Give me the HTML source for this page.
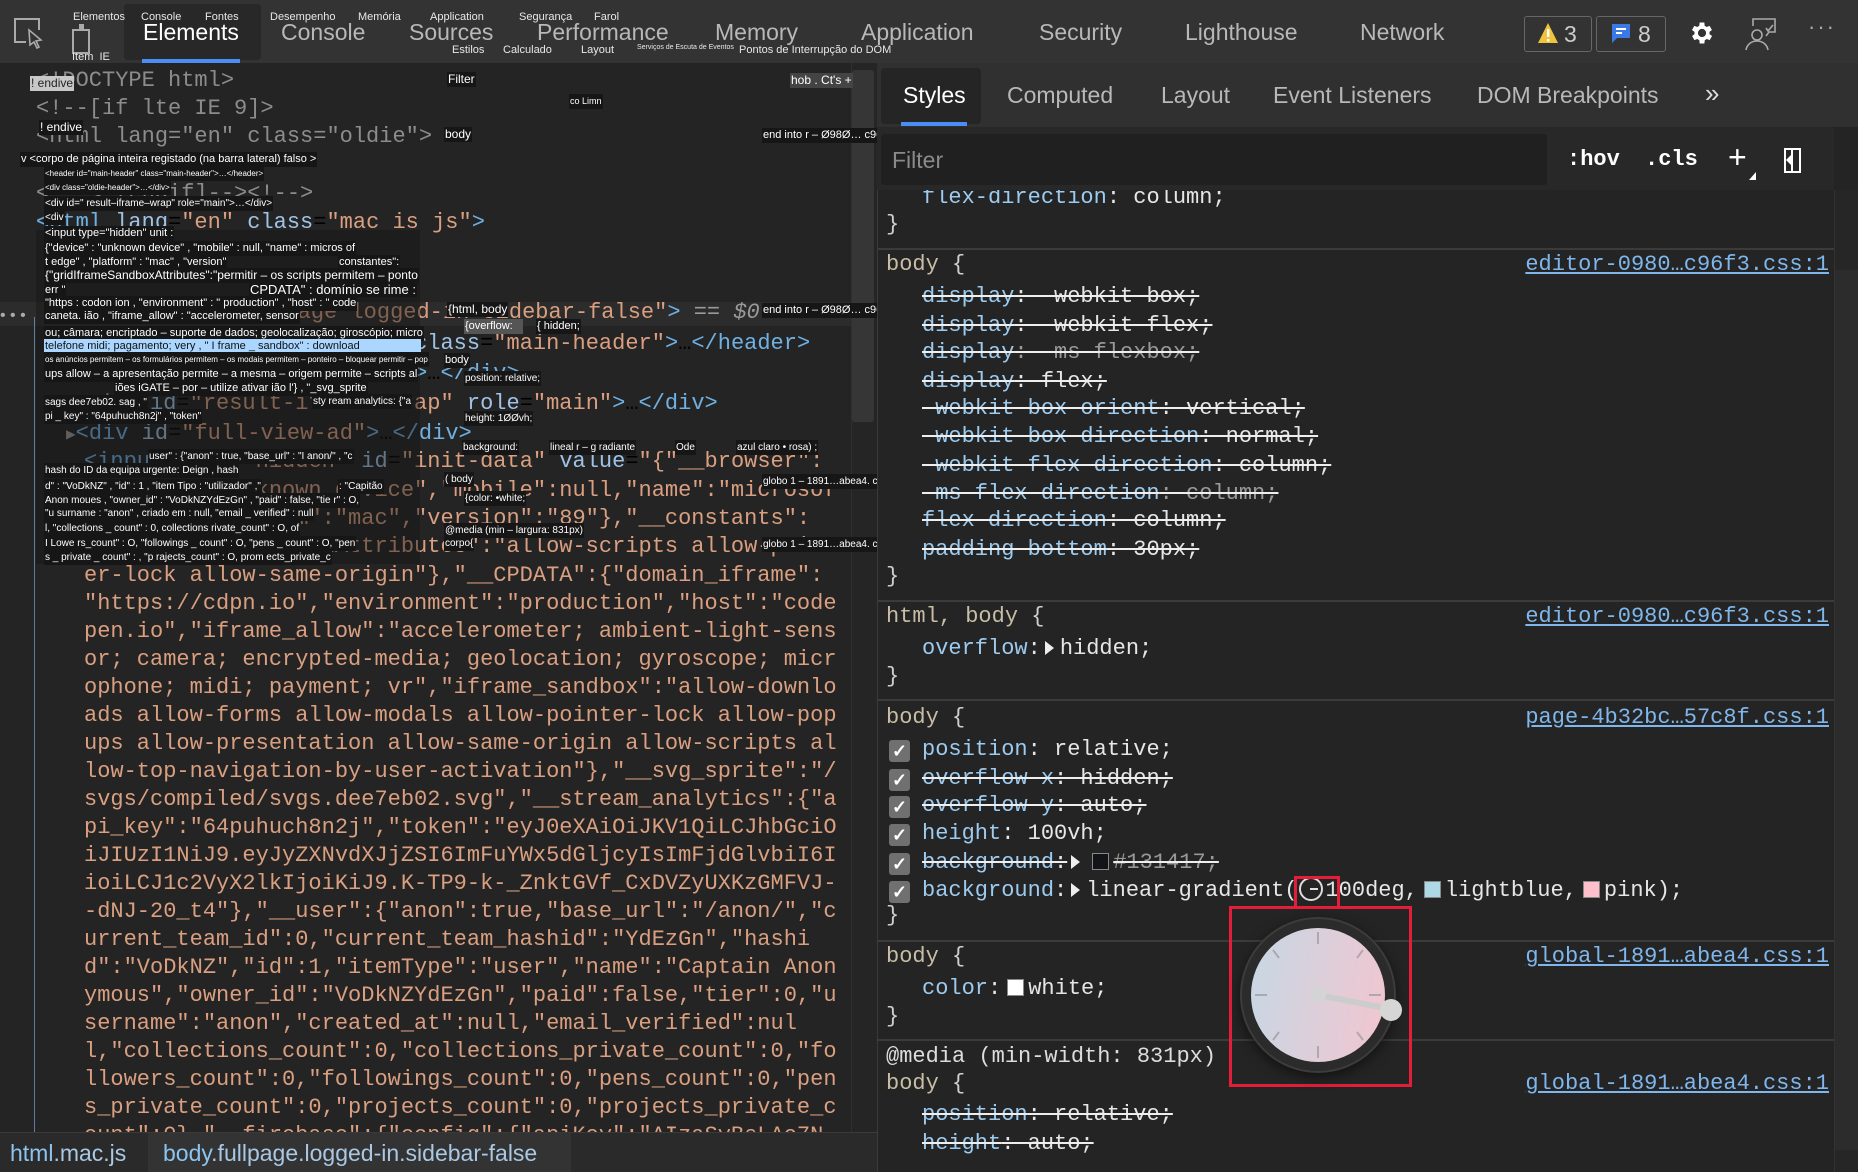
<!DOCTYPE html>
<html><head><meta charset="utf-8">
<style>
*{margin:0;padding:0;box-sizing:border-box}
html,body{width:1858px;height:1172px;overflow:hidden;background:#242424;font-family:"Liberation Sans",sans-serif;position:relative}
.a{position:absolute;white-space:pre}
.m{font-family:"Liberation Mono",monospace;font-size:22px;line-height:28px;height:28px}
.tab{position:absolute;top:17px;font-size:23px;color:#b8b8b8;line-height:30px}
.sm{position:absolute;font-size:11px;color:#e8e8e8;line-height:13px;white-space:nowrap;font-family:"Liberation Sans Narrow","Liberation Sans",sans-serif}
.t{font-size:12px;color:#fff;background:#161616;line-height:15px;font-family:"Liberation Sans Narrow","Liberation Sans",sans-serif;position:absolute;white-space:nowrap;padding:0 1px}
.tg{color:#6fb1e3}.at{color:#9fc3e6}.av{color:#d99f80}.cm{color:#8c8c8c}.ct{color:#d99f80}
.pn{color:#9ccbef}.pv{color:#e6e6e6}.sel{color:#c8bda5}.br{color:#cfcfcf}
.st{text-decoration:line-through;text-decoration-color:#eee}
.lk{color:#7fb6ec;text-decoration:underline;position:absolute;right:29px;font-family:"Liberation Mono",monospace;font-size:22px;line-height:28px}
.sep{position:absolute;left:877px;width:957px;height:2px;background:#3b3b3b}
.cb{position:absolute;left:889px;width:21px;height:22px;background:#707070;border-radius:3px;color:#fff;font-size:18px;line-height:22px;text-align:center;font-weight:bold}
.tri{display:inline-block;width:0;height:0;border-left:9px solid #eee;border-top:7px solid transparent;border-bottom:7px solid transparent;margin:0 6px 0 4px;vertical-align:-1px}
.sw{display:inline-block;width:17px;height:17px;border:1px solid #888;vertical-align:-2px;margin:0 4px 0 6px}
</style></head><body>

<!-- top bar -->
<div class="a" style="left:0;top:0;width:1858px;height:63px;background:#333"></div>
<div class="a" style="left:124px;top:4px;width:137px;height:56px;background:#282828;border-radius:4px"></div>
<div class="a" style="left:142px;top:59px;width:98px;height:4px;background:#4a8ef5"></div>
<svg class="a" style="left:12px;top:16px" width="34" height="34" viewBox="0 0 34 34"><path d="M14 26H3V3h24v11" fill="none" stroke="#aaa" stroke-width="2"/><path d="M17 14l12 10-5 1 3 6-2 1-3-6-4 3z" fill="none" stroke="#aaa" stroke-width="1.6"/></svg>
<svg class="a" style="left:70px;top:24px" width="24" height="30" viewBox="0 0 24 30"><rect x="3" y="6" width="16" height="23" fill="none" stroke="#aaa" stroke-width="2"/><rect x="9" y="0" width="5" height="6" fill="#aaa"/></svg>
<div class="sm" style="left:73px;top:11px">Elementos</div>
<div class="sm" style="left:141px;top:11px">Console</div>
<div class="sm" style="left:205px;top:11px">Fontes</div>
<div class="sm" style="left:270px;top:11px">Desempenho</div>
<div class="sm" style="left:358px;top:11px">Memória</div>
<div class="sm" style="left:430px;top:11px">Application</div>
<div class="sm" style="left:519px;top:11px">Segurança</div>
<div class="sm" style="left:594px;top:11px">Farol</div>
<div class="sm" style="left:72px;top:51px">Item&nbsp; IE</div>
<div class="sm" style="left:452px;top:44px">Estilos</div>
<div class="sm" style="left:503px;top:44px">Calculado</div>
<div class="sm" style="left:581px;top:44px">Layout</div>
<div class="sm" style="left:637px;top:41px;font-size:7px">Serviços de Escuta de Eventos</div>
<div class="sm" style="left:739px;top:44px">Pontos de Interrupção do DOM</div>
<div class="tab" style="left:143px;color:#fff">Elements</div>
<div class="tab" style="left:281px">Console</div>
<div class="tab" style="left:409px">Sources</div>
<div class="tab" style="left:537px">Performance</div>
<div class="tab" style="left:715px">Memory</div>
<div class="tab" style="left:861px">Application</div>
<div class="tab" style="left:1039px">Security</div>
<div class="tab" style="left:1185px">Lighthouse</div>
<div class="tab" style="left:1360px">Network</div>
<div class="a" style="left:1524px;top:16px;width:68px;height:36px;border:1.5px solid #666;border-radius:3px"></div>
<svg class="a" style="left:1537px;top:22px" width="22" height="22" viewBox="0 0 22 22"><path d="M11 1L21 21H1z" fill="#f0c33c"/><rect x="10" y="7" width="2.4" height="8" fill="#fff"/><rect x="10" y="17" width="2.4" height="2.4" fill="#fff"/></svg>
<div class="a" style="left:1564px;top:18px;font-size:23px;color:#ccc;line-height:32px">3</div>
<div class="a" style="left:1596px;top:16px;width:70px;height:36px;border:1.5px solid #666;border-radius:3px"></div>
<svg class="a" style="left:1611px;top:23px" width="20" height="22" viewBox="0 0 20 22"><path d="M1 1h18v14H6l-5 5z" fill="#3b7ae6"/><rect x="5" y="5" width="10" height="2" fill="#fff"/><rect x="5" y="9" width="6" height="2" fill="#fff"/></svg>
<div class="a" style="left:1638px;top:18px;font-size:23px;color:#ccc;line-height:32px">8</div>
<svg class="a" style="left:1688px;top:19px" width="28" height="28" viewBox="0 0 24 24"><path fill="#fff" d="M19.4 13a7.5 7.5 0 000-2l2.1-1.6-2-3.5-2.5 1a7 7 0 00-1.7-1L15 3h-4l-.4 2.9a7 7 0 00-1.7 1l-2.5-1-2 3.5L6.6 11a7.5 7.5 0 000 2l-2.1 1.6 2 3.5 2.5-1a7 7 0 001.7 1L11 21h4l.4-2.9a7 7 0 001.7-1l2.5 1 2-3.5zM13 15.5a3.5 3.5 0 110-7 3.5 3.5 0 010 7z" transform="translate(-1 0)"/></svg>
<svg class="a" style="left:1744px;top:16px" width="36" height="36" viewBox="0 0 36 36"><path d="M9 10V3h22v13h-6l-3 4" fill="none" stroke="#aaa" stroke-width="1.6"/><path d="M22 12l2 3 5-6" fill="none" stroke="#aaa" stroke-width="1.6"/><circle cx="13" cy="19" r="5" fill="none" stroke="#aaa" stroke-width="1.6"/><path d="M2 34c1-6 6-9 11-9s10 3 11 9" fill="none" stroke="#aaa" stroke-width="1.6"/></svg>
<div class="a" style="left:1808px;top:14px;font-size:22px;color:#aaa;letter-spacing:2px">···</div>

<!-- left panel -->
<div class="a" style="left:0;top:302px;width:851px;height:24px;background:#2c2c2c"></div>
<div class="a" style="left:0;top:307px;color:#aaa;font-size:16px">• • •</div>
<div class="a" style="left:34px;top:317px;width:1px;height:815px;background:#5b7fa3"></div>
<div class="a" style="left:851px;top:63px;width:26px;height:1069px;background:#252525;border-left:1px solid #303030"></div>
<div class="a" style="left:852px;top:70px;width:22px;height:352px;background:#363636;border-radius:3px"></div>

<div class="a m cm" style="left:36px;top:67px">&lt;!DOCTYPE html&gt;</div>
<div class="a m cm" style="left:36px;top:95px">&lt;!--[if lte IE 9]&gt;</div>
<div class="a m cm" style="left:36px;top:123px">&lt;html lang="en" class="oldie"&gt;</div>
<div class="a m cm" style="left:36px;top:180px">&lt;!--&lt;![endif]--&gt;&lt;!--&gt;</div>
<div class="a m" style="left:36px;top:209px"><span class="tg">&lt;html</span> <span class="at">lang</span>=<span class="av">"en"</span> <span class="at">class</span>=<span class="av">"mac is js"</span><span class="tg">&gt;</span></div>
<div class="a m" style="left:60px;top:299px"><span class="tg">&lt;body</span> <span class="at">class</span>=<span class="av">"fullpage logged-in sidebar-false"</span><span class="tg">&gt;</span> <span style="color:#999">== <i>$0</i></span></div>
<div class="a m" style="left:84px;top:330px"><span class="tg">&lt;header</span> <span class="at">id</span>=<span class="av">"main-header"</span> <span class="at">class</span>=<span class="av">"main-header"</span><span class="tg">&gt;</span>…<span class="tg">&lt;/header&gt;</span></div>
<div class="a m" style="left:84px;top:360px"><span class="tg">&lt;div</span> <span class="at">class</span>=<span class="av">"oldie-header"</span><span class="tg">&gt;</span>…<span class="tg">&lt;/div&gt;</span></div>
<div class="a m" style="left:84px;top:390px"><span class="tg">&lt;div</span> <span class="at">id</span>=<span class="av">"result-iframe-wrap"</span> <span class="at">role</span>=<span class="av">"main"</span><span class="tg">&gt;</span>…<span class="tg">&lt;/div&gt;</span></div>
<div class="a m" style="left:66px;top:420px"><span style="color:#999;font-size:16px">▶</span><span class="tg">&lt;div</span> <span class="at">id</span>=<span class="av">"full-view-ad"</span><span class="tg">&gt;</span>…<span class="tg">&lt;/div&gt;</span></div>
<div class="a m" style="left:84px;top:448px"><span class="tg">&lt;input</span> <span class="at">type</span>=<span class="av">"hidden"</span> <span class="at">id</span>=<span class="av">"init-data"</span> <span class="at">value</span>=<span class="av">"{"__browser":</span></div>
<div class="a m ct" style="left:84px;top:477px">{"device":"unknown device","mobile":null,"name":"microsof</div>
<div class="a m ct" style="left:84px;top:505px">t edge","platform":"mac","version":"89"},"__constants":</div>
<div class="a m ct" style="left:84px;top:533px">{"gridIframeSandboxAttributes":"allow-scripts allow-point</div>
<div class="a m ct" style="left:84px;top:562px">er-lock allow-same-origin"},"__CPDATA":{"domain_iframe":</div>
<div class="a m ct" style="left:84px;top:590px">"https://cdpn.io","environment":"production","host":"code</div>
<div class="a m ct" style="left:84px;top:618px">pen.io","iframe_allow":"accelerometer; ambient-light-sens</div>
<div class="a m ct" style="left:84px;top:646px">or; camera; encrypted-media; geolocation; gyroscope; micr</div>
<div class="a m ct" style="left:84px;top:674px">ophone; midi; payment; vr","iframe_sandbox":"allow-downlo</div>
<div class="a m ct" style="left:84px;top:702px">ads allow-forms allow-modals allow-pointer-lock allow-pop</div>
<div class="a m ct" style="left:84px;top:730px">ups allow-presentation allow-same-origin allow-scripts al</div>
<div class="a m ct" style="left:84px;top:758px">low-top-navigation-by-user-activation"},"__svg_sprite":"/</div>
<div class="a m ct" style="left:84px;top:786px">svgs/compiled/svgs.dee7eb02.svg","__stream_analytics":{"a</div>
<div class="a m ct" style="left:84px;top:814px">pi_key":"64puhuch8n2j","token":"eyJ0eXAiOiJKV1QiLCJhbGciO</div>
<div class="a m ct" style="left:84px;top:842px">iJIUzI1NiJ9.eyJyZXNvdXJjZSI6ImFuYWx5dGljcyIsImFjdGlvbiI6I</div>
<div class="a m ct" style="left:84px;top:870px">ioiLCJ1c2VyX2lkIjoiKiJ9.K-TP9-k-_ZnktGVf_CxDVZyUXKzGMFVJ-</div>
<div class="a m ct" style="left:84px;top:898px">-dNJ-20_t4"},"__user":{"anon":true,"base_url":"/anon/","c</div>
<div class="a m ct" style="left:84px;top:926px">urrent_team_id":0,"current_team_hashid":"YdEzGn","hashi</div>
<div class="a m ct" style="left:84px;top:954px">d":"VoDkNZ","id":1,"itemType":"user","name":"Captain Anon</div>
<div class="a m ct" style="left:84px;top:982px">ymous","owner_id":"VoDkNZYdEzGn","paid":false,"tier":0,"u</div>
<div class="a m ct" style="left:84px;top:1010px">sername":"anon","created_at":null,"email_verified":nul</div>
<div class="a m ct" style="left:84px;top:1038px">l,"collections_count":0,"collections_private_count":0,"fo</div>
<div class="a m ct" style="left:84px;top:1066px">llowers_count":0,"followings_count":0,"pens_count":0,"pen</div>
<div class="a m ct" style="left:84px;top:1094px">s_private_count":0,"projects_count":0,"projects_private_c</div>
<div class="a m ct" style="left:84px;top:1122px">ount":0},"__firebase":{"config":{"apiKey":"AIzaSyBsLAo7N</div>

<!-- overlay garbage -->
<div class="a" style="left:36px;top:230px;width:384px;height:334px;background:rgba(22,22,22,0.45)"></div>
<div class="t" style="left:30px;top:76px;background:#c8c8c8;color:#222">! endive</div>
<div class="t" style="left:447px;top:72px">Filter</div>
<div class="t" style="left:790px;top:73px;background:#444">hob . Ct's +</div>
<div class="t" style="left:569px;top:94px;font-size:9px">co Limn</div>
<div class="t" style="left:39px;top:120px">! endive</div>
<div class="t" style="left:444px;top:127px">body</div>
<div class="t" style="left:762px;top:128px;font-size:11px">end into r – Ø98Ø… c96f3. cuss: 1</div>
<div class="t" style="left:20px;top:152px;font-size:11px">v &lt;corpo de página inteira registado (na barra lateral) falso &gt;</div>
<div class="t" style="left:44px;top:166px;font-size:8px">&lt;header id="main-header" class="main-header"&gt;…&lt;/header&gt;</div>
<div class="t" style="left:44px;top:180px;font-size:8px">&lt;div class="oldie-header"&gt;…&lt;/div&gt;</div>
<div class="t" style="left:44px;top:196px;font-size:10px">&lt;div id=" result–iframe–wrap" role="main"&gt;…&lt;/div&gt;</div>
<div class="t" style="left:44px;top:210px;font-size:10px">&lt;div</div>
<div class="t" style="left:44px;top:226px;font-size:11px">&lt;input type="hidden" unit :</div>
<div class="t" style="left:44px;top:241px;font-size:11px">{"device" : "unknown device" , "mobile" : null, "name" : micros of</div>
<div class="t" style="left:44px;top:255px;font-size:11px">t edge" , "platform" : "mac" , "version"</div>
<div class="t" style="left:338px;top:255px;font-size:11px">constantes":</div>
<div class="t" style="left:44px;top:268px;font-size:12px">{"gridIframeSandboxAttributes":"permitir – os scripts permitem – ponto</div>
<div class="t" style="left:44px;top:283px;font-size:11px">err "</div>
<div class="t" style="left:249px;top:282px;font-size:13px">CPDATA" : domínio se rime :</div>
<div class="t" style="left:44px;top:296px;font-size:11px">"https : codon ion , "environment" : " production" , "host" : " code</div>
<div class="t" style="left:447px;top:302px;font-size:12px">{html, body</div>
<div class="t" style="left:762px;top:303px;font-size:11px">end into r – Ø98Ø… c96f3. cuss: 1</div>
<div class="t" style="left:44px;top:309px;font-size:11px">caneta. ião , "iframe_allow" : "accelerometer, sensor</div>
<div class="t" style="left:464px;top:319px;font-size:11px;background:#555">{overflow:&nbsp;&nbsp;&nbsp;</div>
<div class="t" style="left:536px;top:319px;font-size:11px">{ hidden;</div>
<div class="t" style="left:44px;top:326px;font-size:11px">ou; câmara; encriptado – suporte de dados; geolocalização; giroscópio; micro</div>
<div class="t" style="left:44px;top:339px;font-size:11px;background:#aad6ff;color:#111;width:377px">telefone midi; pagamento; very , " I frame _ sandbox" : download</div>
<div class="t" style="left:44px;top:352px;font-size:8px">os anúncios permitem – os formulários permitem – os modais permitem – ponteiro – bloquear permitir – pop</div>
<div class="t" style="left:444px;top:353px;font-size:11px">body</div>
<div class="t" style="left:44px;top:367px;font-size:11px">ups allow – a apresentação permite – a mesma – origem permite – scripts al</div>
<div class="t" style="left:464px;top:371px;font-size:10px">position: relative;</div>
<div class="t" style="left:114px;top:381px;font-size:11px">iões iGATE – por – utilize ativar ião l'} , "_svg_sprite</div>
<div class="t" style="left:44px;top:395px;font-size:10px">sags dee7eb02. sag , "</div>
<div class="t" style="left:312px;top:394px;font-size:10px">sty ream analytics: {"a</div>
<div class="t" style="left:44px;top:409px;font-size:10px">pi _ key" : "64puhuch8n2j" , "token"</div>
<div class="t" style="left:464px;top:411px;font-size:10px">height: 1ØØvh;</div>
<div class="t" style="left:462px;top:440px;font-size:10px">background:</div>
<div class="t" style="left:549px;top:440px;font-size:10px">lineal r – g radiante</div>
<div class="t" style="left:675px;top:440px;font-size:10px">Ode</div>
<div class="t" style="left:736px;top:440px;font-size:10px">azul claro • rosa) ;</div>
<div class="t" style="left:148px;top:449px;font-size:10px">user" : {"anon" : true, "base_url" : "I anon/" , "c</div>
<div class="t" style="left:44px;top:463px;font-size:10px">hash do ID da equipa urgente: Deign , hash</div>
<div class="t" style="left:444px;top:472px;font-size:10px">( body</div>
<div class="t" style="left:762px;top:474px;font-size:10px">globo 1 – 1891…abea4. cuss: 1</div>
<div class="t" style="left:44px;top:479px;font-size:10px">d" : "VoDkNZ" , "id" : 1 , "item Tipo : "utilizador" ,"</div>
<div class="t" style="left:338px;top:479px;font-size:10px">: "Capitão</div>
<div class="t" style="left:44px;top:493px;font-size:10px">Anon moues , "owner_id" : "VoDkNZYdEzGn" , "paid" : false, "tie r" : O,</div>
<div class="t" style="left:464px;top:491px;font-size:10px">{color: •white;</div>
<div class="t" style="left:44px;top:506px;font-size:10px">"u surname : "anon" , criado em : null, "email _ verified" : null</div>
<div class="t" style="left:44px;top:521px;font-size:10px">l, "collections _ count" : 0, collections rivate_count" : O, of</div>
<div class="t" style="left:444px;top:523px;font-size:10px">@media (min – largura: 831px)</div>
<div class="t" style="left:44px;top:536px;font-size:10px">I Lowe rs_count" : O, "followings _ count" : O, "pens _ count" : O, "pen</div>
<div class="t" style="left:444px;top:536px;font-size:10px">corpo{</div>
<div class="t" style="left:762px;top:537px;font-size:10px">globo 1 – 1891…abea4. cuss: 1</div>
<div class="t" style="left:44px;top:550px;font-size:10px">s _ private _ count" : , "p rajects_count" : O, prom ects_private_c</div>

<!-- status bar -->
<div class="a" style="left:0;top:1132px;width:877px;height:40px;background:#2a2a2a;border-top:1px solid #3a3a3a"></div>
<div class="a" style="left:148px;top:1133px;width:423px;height:39px;background:#333"></div>
<div class="a" style="left:10px;top:1138px;font-size:23px;line-height:30px"><span style="color:#8cc4f0">html</span><span style="color:#a9c8e4">.mac.js</span></div>
<div class="a" style="left:163px;top:1138px;font-size:23px;line-height:30px"><span style="color:#8cc4f0">body</span><span style="color:#a9c8e4">.fullpage.logged-in.sidebar-false</span></div>

<!-- right panel -->
<div class="a" style="left:877px;top:63px;width:981px;height:1109px;background:#242424;border-left:1px solid #3a3a3a"></div>
<div class="a m" style="left:922px;top:184px"><span class="pn">flex-direction</span><span class="pv">: column;</span></div>
<div class="a" style="left:877px;top:63px;width:981px;height:64px;background:#303030"></div>
<div class="a" style="left:881px;top:68px;width:100px;height:56px;background:#252525;border-radius:4px"></div>
<div class="a" style="left:901px;top:122px;width:66px;height:4px;background:#4a8ef5"></div>
<div class="a" style="left:903px;top:80px;font-size:23px;color:#fff;line-height:30px">Styles</div>
<div class="a" style="left:1007px;top:80px;font-size:23px;color:#b8b8b8;line-height:30px">Computed</div>
<div class="a" style="left:1161px;top:80px;font-size:23px;color:#b8b8b8;line-height:30px">Layout</div>
<div class="a" style="left:1273px;top:80px;font-size:23px;color:#b8b8b8;line-height:30px">Event Listeners</div>
<div class="a" style="left:1477px;top:80px;font-size:23px;color:#b8b8b8;line-height:30px">DOM Breakpoints</div>
<div class="a" style="left:1705px;top:78px;font-size:26px;color:#ddd;line-height:30px">»</div>
<div class="a" style="left:877px;top:127px;width:957px;height:63px;background:#282828"></div>
<div class="a" style="left:881px;top:134px;width:666px;height:51px;background:#202020;border-radius:3px"></div>
<div class="a" style="left:892px;top:146px;font-size:23px;color:#8a8a8a;line-height:28px">Filter</div>
<div class="a" style="left:1567px;top:146px;font-family:'Liberation Mono',monospace;font-weight:bold;font-size:22px;color:#fff;line-height:28px">:hov</div>
<div class="a" style="left:1645px;top:146px;font-family:'Liberation Mono',monospace;font-weight:bold;font-size:22px;color:#fff;line-height:28px">.cls</div>
<div class="a" style="left:1728px;top:140px;font-size:32px;color:#fff;line-height:34px">+</div>
<div class="a" style="left:1749px;top:172px;width:0;height:0;border-left:7px solid transparent;border-bottom:8px solid #fff"></div>
<div class="a" style="left:1784px;top:148px;width:17px;height:25px;border:2px solid #fff"></div>
<div class="a" style="left:1791px;top:150px;width:2px;height:21px;background:#fff"></div>
<div class="a" style="left:1786px;top:155px;width:0;height:0;border-right:5px solid #fff;border-top:5px solid transparent;border-bottom:5px solid transparent"></div>
<div class="a" style="left:1834px;top:190px;width:24px;height:982px;background:#262626;border-left:1px solid #333"></div>
<div class="a" style="left:1835px;top:270px;width:23px;height:880px;background:#2c2c2c"></div>

<div class="a m br" style="left:886px;top:211px">}</div>
<div class="sep" style="top:248px"></div>
<div class="a m" style="left:886px;top:251px"><span class="sel">body</span> <span class="br">{</span></div>
<div class="lk" style="top:251px">editor-0980…c96f3.css:1</div>
<div class="a m st" style="left:922px;top:283px"><span class="pn">display</span><span class="pv">: -webkit-box;</span></div>
<div class="a m st" style="left:922px;top:312px"><span class="pn">display</span><span class="pv">: -webkit-flex;</span></div>
<div class="a m st" style="left:922px;top:339px"><span class="pn">display</span><span style="color:#999">: -ms-flexbox;</span></div>
<div class="a m st" style="left:922px;top:368px"><span class="pn">display</span><span class="pv">: flex;</span></div>
<div class="a m st" style="left:922px;top:395px"><span class="pn">-webkit-box-orient</span><span class="pv">: vertical;</span></div>
<div class="a m st" style="left:922px;top:423px"><span class="pn">-webkit-box-direction</span><span class="pv">: normal;</span></div>
<div class="a m st" style="left:922px;top:452px"><span class="pn">-webkit-flex-direction</span><span class="pv">: column;</span></div>
<div class="a m st" style="left:922px;top:480px"><span class="pn">-ms-flex-direction</span><span style="color:#999">: column;</span></div>
<div class="a m st" style="left:922px;top:507px"><span class="pn">flex-direction</span><span class="pv">: column;</span></div>
<div class="a m st" style="left:922px;top:536px"><span class="pn">padding-bottom</span><span class="pv">: 30px;</span></div>
<div class="a m br" style="left:886px;top:563px">}</div>
<div class="sep" style="top:600px"></div>
<div class="a m" style="left:886px;top:603px"><span class="sel">html, body</span> <span class="br">{</span></div>
<div class="lk" style="top:603px">editor-0980…c96f3.css:1</div>
<div class="a m" style="left:922px;top:635px"><span class="pn">overflow</span><span class="pv">:<span class="tri"></span>hidden;</span></div>
<div class="a m br" style="left:886px;top:663px">}</div>
<div class="sep" style="top:699px"></div>
<div class="a m" style="left:886px;top:704px"><span class="sel">body</span> <span class="br">{</span></div>
<div class="lk" style="top:704px">page-4b32bc…57c8f.css:1</div>
<div class="cb" style="top:740px">✓</div>
<div class="cb" style="top:769px">✓</div>
<div class="cb" style="top:796px">✓</div>
<div class="cb" style="top:824px">✓</div>
<div class="cb" style="top:853px">✓</div>
<div class="cb" style="top:881px">✓</div>
<div class="a m" style="left:922px;top:736px"><span class="pn">position</span><span class="pv">: relative;</span></div>
<div class="a m st" style="left:922px;top:765px"><span class="pn">overflow-x</span><span class="pv">: hidden;</span></div>
<div class="a m st" style="left:922px;top:792px"><span class="pn">overflow-y</span><span class="pv">: auto;</span></div>
<div class="a m" style="left:922px;top:820px"><span class="pn">height</span><span class="pv">: 100vh;</span></div>
<div class="a m st" style="left:922px;top:849px"><span class="pn">background</span><span class="pv">:<span class="tri"></span><span class="sw" style="background:#131417"></span><span style="color:#999">#131417;</span></span></div>
<div class="a m" style="left:922px;top:877px"><span class="pn">background</span><span class="pv">:<span class="tri"></span>linear-gradient(<span style="display:inline-block;width:24px;height:24px;border:2px solid #ddd;border-radius:50%;vertical-align:-5px;margin:0 2px;position:relative"><span style="position:absolute;left:9px;top:9px;width:8px;height:2px;background:#ddd"></span></span>100deg,<span class="sw" style="background:#add8e6"></span>lightblue,<span class="sw" style="background:#ffc0cb"></span>pink);</span></div>
<div class="a m br" style="left:886px;top:902px">}</div>
<div class="sep" style="top:940px"></div>
<div class="a m" style="left:886px;top:943px"><span class="sel">body</span> <span class="br">{</span></div>
<div class="lk" style="top:943px">global-1891…abea4.css:1</div>
<div class="a m" style="left:922px;top:975px"><span class="pn">color</span><span class="pv">:<span class="sw" style="background:#fff"></span>white;</span></div>
<div class="a m br" style="left:886px;top:1003px">}</div>
<div class="sep" style="top:1039px"></div>
<div class="a m" style="left:886px;top:1043px;color:#ddd">@media (min-width: 831px)</div>
<div class="a m" style="left:886px;top:1070px"><span class="sel">body</span> <span class="br">{</span></div>
<div class="lk" style="top:1070px">global-1891…abea4.css:1</div>
<div class="a m st" style="left:922px;top:1101px"><span class="pn">position</span><span class="pv">: relative;</span></div>
<div class="a m st" style="left:922px;top:1130px"><span class="pn">height</span><span class="pv">: auto;</span></div>

<!-- angle picker -->
<div class="a" style="left:1294px;top:876px;width:46px;height:33px;border:3px solid #e41e3a"></div>
<div class="a" style="left:1229px;top:906px;width:183px;height:181px;border:3px solid #e41e3a"></div>
<div class="a" style="left:1240px;top:917px;width:156px;height:156px;border-radius:50%;background:#2b2b2c;border:2px solid #3c3c3c;box-shadow:0 4px 12px rgba(0,0,0,.5)"></div>
<div class="a" style="left:1251px;top:928px;width:134px;height:134px;border-radius:50%;background:linear-gradient(100deg,#c6d8e4,#f2c5cf)"></div>
<svg class="a" style="left:1240px;top:917px" width="170" height="160" viewBox="0 0 170 160">
<g stroke="#9a9aa0" stroke-width="2" opacity=".7">
<line x1="78" y1="15" x2="78" y2="27"/><line x1="78" y1="129" x2="78" y2="141"/>
<line x1="15" y1="78" x2="27" y2="78"/><line x1="129" y1="78" x2="141" y2="78"/>
<line x1="33" y1="33" x2="39" y2="41"/><line x1="123" y1="33" x2="117" y2="41"/>
<line x1="33" y1="123" x2="39" y2="115"/><line x1="123" y1="123" x2="117" y2="115"/>
</g>
<line x1="78" y1="78" x2="150" y2="92" stroke="#ccc" stroke-width="6" stroke-linecap="round"/>
<circle cx="78" cy="78" r="8" fill="#d4d4d4"/>
<circle cx="151" cy="93" r="11" fill="#d6d6d6"/>
</svg>
</body></html>
